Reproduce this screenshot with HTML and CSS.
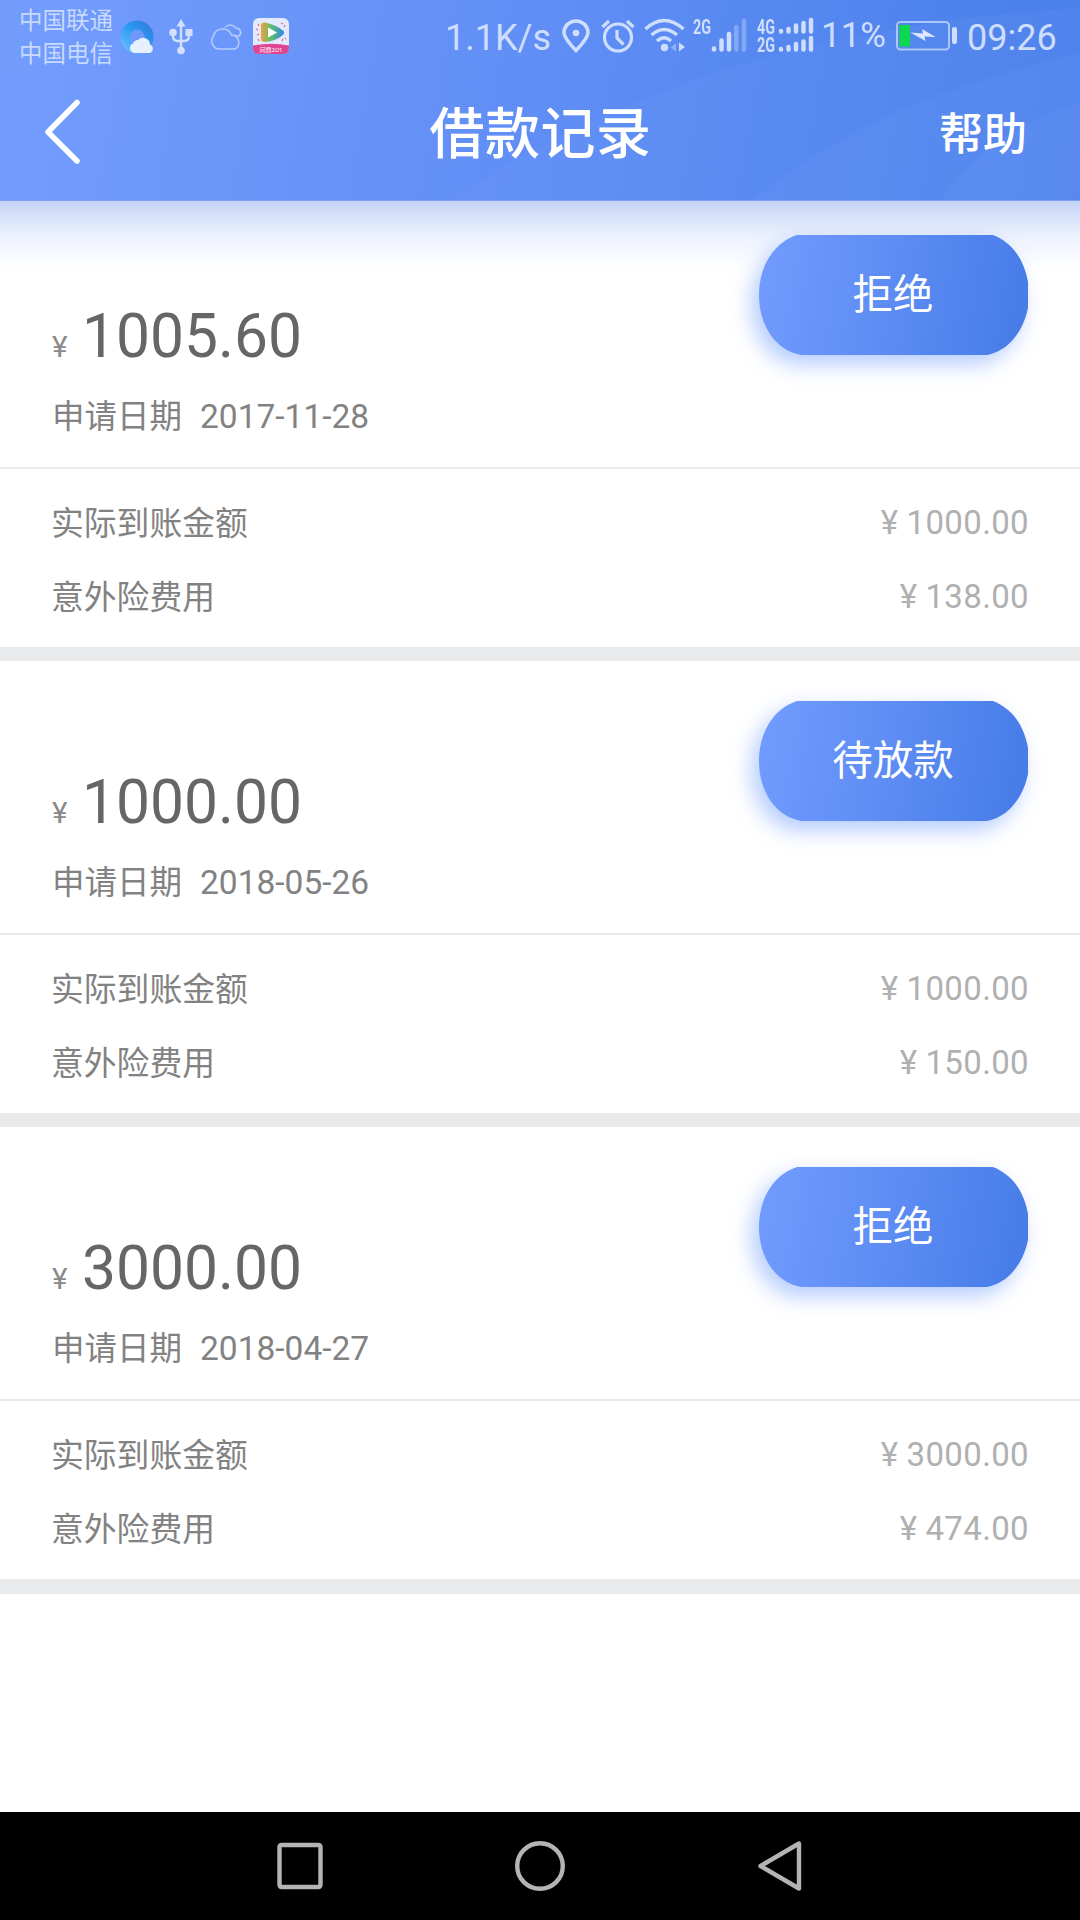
FILE: index.html
```html
<!DOCTYPE html>
<html lang="zh-CN">
<head>
<meta charset="utf-8">
<title>借款记录</title>
<link rel="stylesheet" href="styles.css">
</head>
<body>
<svg class="defs" width="0" height="0" aria-hidden="true">
  <defs>
    <linearGradient id="pill-fill" gradientUnits="userSpaceOnUse" x1="10" y1="20" x2="260" y2="65">
      <stop offset="0" stop-color="#709afd"/>
      <stop offset=".3" stop-color="#6592f8"/>
      <stop offset="1" stop-color="#487de8"/>
    </linearGradient>
    <symbol id="pill" viewBox="0 0 269 120">
      <path d="M38 0H234C254 8 265 25 269 47V73C264 97 249 116 228 120H42C16 115 0 90 0 60C0 32 14 8 38 0Z" fill="url(#pill-fill)"/>
    </symbol>
  </defs>
</svg>
<div class="screen">
  <header class="header">
    <svg class="waves" viewBox="0 0 1080 201" aria-hidden="true">
      <path d="M450 201Q590 107 760 59Q910 18 1080 8V201Z"/>
      <path d="M750 201Q850 122 960 88Q1020 66 1080 53V201Z"/>
      <path d="M942 201Q965 160 1010 133Q1040 115 1080 103V201Z"/>
    </svg>
    <div class="status">
      <div class="carriers"><span>中国联通</span><span>中国电信</span></div>
      <svg class="i-browser" width="34" height="34" viewBox="0 0 34 34">
        <defs><linearGradient id="ring" x1="0" y1="1" x2="1" y2="0"><stop offset="0" stop-color="#65b9ff"/><stop offset=".5" stop-color="#2a9cf5"/><stop offset="1" stop-color="#2f7fe0"/></linearGradient></defs>
        <circle cx="17" cy="17" r="12" fill="none" stroke="url(#ring)" stroke-width="9"/>
        <path d="M14 33a5 5 0 0 1-1-9.500a6 6 0 0 1 5-3.500a7 7 0 0 1 12 4.500a4.600 4.600 0 0 1 0 8.500Z" fill="#e7f0ff"/>
      </svg>
      <svg class="i-usb" width="24" height="36" viewBox="0 0 24 36" fill="none" stroke="#d3e0fd" stroke-width="2.400">
        <path d="M12 7V29M4 13V17Q4 22 9 22H15Q20 22 20 17V13"/>
        <path d="M12 0L16.500 7.500H7.500Z" fill="#d3e0fd" stroke="none"/>
        <circle cx="12" cy="31.500" r="3.800" fill="#d3e0fd" stroke="none"/>
        <circle cx="4" cy="13.500" r="3.800" fill="#d3e0fd" stroke="none"/>
        <path d="M16.500 10h7v7h-7z" fill="#d3e0fd" stroke="none"/>
      </svg>
      <svg class="i-cloud" width="32" height="28" viewBox="0 0 32 28" fill="none" stroke="#b5cbfc" stroke-width="1.500">
        <path d="M9 26A8 8 0 0 1 2.500 13A9.500 9.500 0 0 1 20.500 12A7.500 7.500 0 0 1 24 26Z"/>
        <path d="M14 4.500A7 7 0 0 1 25 5A4.500 4.500 0 0 1 28.500 12.500Q26.500 13.500 24 12.500"/>
      </svg>
      <div class="video-app">
        <svg width="36" height="36" viewBox="0 0 36 36">
          <defs><linearGradient id="play"><stop offset="0" stop-color="#f1a23c"/><stop offset=".45" stop-color="#57bf70"/><stop offset="1" stop-color="#3585e8"/></linearGradient></defs>
          <rect width="36" height="36" rx="6" fill="#e3eaff"/>
          <path d="M0 27.500Q18 24 36 27.500V30Q36 36 30 36H6Q0 36 0 30Z" fill="#df4593"/>
          <path d="M8 7Q8 4 12 4.500Q24 7 30.500 13Q32 15 30 17Q23 23 12 24Q8 24 8 21Z" fill="url(#play)"/>
          <path d="M15 9.500L24 14.500L15 19.500Z" fill="#fff"/>
          <path d="M5 6l1 2M3 11l2 1M4 17l2-1M5 21l1 2M28 5l2 1M31 9l1-2M29 23l1-2M32 20l1 1" stroke="#e46b72" stroke-width="1.200"/>
        </svg>
        <span>问鼎2O1</span>
      </div>
      <span class="speed">1.1K/s</span>
      <svg class="i-pin" width="28" height="36" viewBox="0 0 28 36" fill="none" stroke="#cfdefe">
        <path d="M14 31.500Q2 19 2 13.500A12 11.500 0 0 1 26 13.500Q26 19 14 31.500Z" stroke-width="3.500"/>
        <circle cx="14" cy="14" r="3.300" fill="#cfdefe" stroke="none"/>
      </svg>
      <svg class="i-alarm" width="34" height="36" viewBox="0 0 34 36" fill="none" stroke="#cfdefe" stroke-width="3.200">
        <circle cx="17" cy="19.500" r="13.500"/>
        <path d="M16 12V20L22.500 26.500M1.500 9L8 3M26 3L32.500 9"/>
      </svg>
      <svg class="i-wifi" width="42" height="36" viewBox="0 0 42 36" fill="none" stroke="#cfdefe" stroke-width="3.500">
        <path d="M1.500 11Q20 -6 39.500 11M7.500 17Q20 6 33 17M13 23Q20 16.500 27 23"/>
        <circle cx="20.500" cy="29.500" r="3.700" fill="#cfdefe" stroke="none"/>
        <path d="M32 25.500V33.500L26.500 29.500Z" fill="#8eb0f7" stroke="none"/><path d="M35 24.500V33.500L41 29Z" fill="#cfdefe" stroke="none"/>
      </svg>
      <span class="net"><span>2G</span></span>
      <svg class="i-sig" width="36" height="36" viewBox="0 0 36 36" stroke="#cfdefe" stroke-width="4.500" stroke-linecap="round">
        <path d="M3 30.500V31.500M10.500 22.500V31.500M18 16V31.500"/><path d="M25.300 9V31.500M33 3V31.500" stroke="#83a9f5"/>
      </svg>
      <span class="net net-dual"><span>4G<br>2G</span></span>
      <svg class="i-dual" width="36" height="36" viewBox="0 0 36 36" stroke="#cfdefe" stroke-width="4.500" stroke-linecap="round">
        <path d="M3 14V14.500M10.500 12V14.500M18 8.500V14.500M25.500 6V14.500M33 3V14.500M3 32V32.500M10.500 30V32.500M18 27V32.500M25.500 24.500V32.500M33 21V32.500"/>
      </svg>
      <span class="percent">11%</span>
      <svg class="i-batt" width="62" height="30" viewBox="0 0 62 30">
        <rect x="1" y="1" width="52" height="27.500" rx="3.500" fill="none" stroke="#aac6fa" stroke-width="2"/>
        <path d="M3.500 4H14V25.500H3.500Z" fill="#0dd84e"/>
        <path d="M14.500 11.500L27 12.500L26 8L39.500 16L28.500 15.500L29.500 20Z" fill="#dce8ff"/>
        <rect x="56" y="6" width="5" height="17" rx="2" fill="#cfdefe"/>
      </svg>
      <span class="clock">09:26</span>
    </div>
    <nav class="titlebar">
      <svg class="back" width="38" height="66" viewBox="0 0 38 66" fill="none" stroke="#fff" stroke-width="5.500" stroke-linecap="round" stroke-linejoin="round"><path d="M33 3.500L4 33L33 62"/></svg>
      <h1>借款记录</h1>
      <a class="help">帮助</a>
    </nav>
  </header>
  <main class="records">
    <article class="record">
      <div class="summary">
        <div class="loan">
          <p class="amount"><span class="yen">¥</span><span>1005.60</span></p>
          <p class="date"><span class="date-label">申请日期</span><span>2017-11-28</span></p>
        </div>
        <div class="state"><svg viewBox="0 0 269 120"><use href="#pill"/></svg><span>拒绝</span></div>
      </div>
      <dl class="details">
        <div><dt>实际到账金额</dt><dd>¥ 1000.00</dd></div>
        <div><dt>意外险费用</dt><dd>¥ 138.00</dd></div>
      </dl>
    </article>
    <article class="record">
      <div class="summary">
        <div class="loan">
          <p class="amount"><span class="yen">¥</span><span>1000.00</span></p>
          <p class="date"><span class="date-label">申请日期</span><span>2018-05-26</span></p>
        </div>
        <div class="state"><svg viewBox="0 0 269 120"><use href="#pill"/></svg><span>待放款</span></div>
      </div>
      <dl class="details">
        <div><dt>实际到账金额</dt><dd>¥ 1000.00</dd></div>
        <div><dt>意外险费用</dt><dd>¥ 150.00</dd></div>
      </dl>
    </article>
    <article class="record">
      <div class="summary">
        <div class="loan">
          <p class="amount"><span class="yen">¥</span><span>3000.00</span></p>
          <p class="date"><span class="date-label">申请日期</span><span>2018-04-27</span></p>
        </div>
        <div class="state"><svg viewBox="0 0 269 120"><use href="#pill"/></svg><span>拒绝</span></div>
      </div>
      <dl class="details">
        <div><dt>实际到账金额</dt><dd>¥ 3000.00</dd></div>
        <div><dt>意外险费用</dt><dd>¥ 474.00</dd></div>
      </dl>
    </article>
  </main>
  <footer class="navbar">
    <svg width="50" height="54" viewBox="0 0 50 54"><rect x="4.500" y="6" width="41" height="42" rx="2"/></svg>
    <svg width="50" height="54" viewBox="0 0 50 54"><circle cx="25" cy="27" r="22.800"/></svg>
    <svg width="50" height="54" viewBox="0 0 50 54"><path d="M44 4.500V49.500L5.500 27Z"/></svg>
  </footer>
</div>
</body>
</html>
```
FILE: styles.css
```css
* { box-sizing: border-box; margin: 0; padding: 0; }
body { font-family: Roboto, "Noto Sans CJK SC", sans-serif; background: #fff; color: #828282; }
.defs { position: absolute; }
.screen { width: 1080px; height: 1920px; display: flex; flex-direction: column; }
svg { display: block; flex: none; }

/* header */
.header {
  position: relative;
  height: 201px;
  flex: none;
  background: linear-gradient(100deg, #739dfd 0%, #6390f7 43%, #4d82eb 88%, #4a7ee9 100%);
  border-bottom: 1px solid #7d9ff0;
}
.waves { position: absolute; inset: 0; width: 1080px; height: 201px; fill: #7ba4ff; fill-opacity: .12; }
.status { position: relative; display: flex; height: 74px; padding-left: 19px; color: #cfdefe; white-space: nowrap; align-items: flex-start; }
.carriers { display: flex; flex-direction: column; width: 101px; font-size: 23.500px; line-height: 32.500px; padding-top: 5px; color: #c8d9fe; }
.i-browser { margin-top: 20px; }
.i-usb { margin: 19px 0 0 15px; }
.i-cloud { margin: 23px 0 0 18px; }
.video-app { display: grid; width: 36px; margin: 18px 0 0 10px; }
.video-app > * { grid-area: 1 / 1; }
.video-app span { align-self: end; text-align: center; font-size: 6px; line-height: 8px; color: #fff; }
.speed { width: 105px; margin: 17px 0 0 156px; font-size: 36px; line-height: 42px; }
.i-pin { margin: 19px 0 0 12px; }
.i-alarm { margin: 18px 0 0 11px; }
.i-wifi { margin: 18px 0 0 9px; }
.net { width: 19px; margin: 18px 0 0 7px; font: 700 20.500px/18px Roboto, sans-serif; }
.net span { display: block; transform: scaleX(.7); transform-origin: left; }
.i-sig { margin: 18px 0 0 -1px; }
.net-dual { margin-left: 10px; }
.i-dual { margin: 17px 0 0 2px; }
.percent { width: 66px; margin: 15px 0 0 7px; font-size: 35px; line-height: 42px; }
.i-batt { margin: 21px 0 0 9px; }
.clock { margin: 17px 0 0 9px; font-size: 36px; line-height: 42px; }
.titlebar { position: relative; display: grid; grid-template-columns: 1fr auto 1fr; align-items: center; height: 120px; padding: 0 53px 0 54px; color: #fff; }
.back { align-self: start; margin: 25px 0 0 -10px; }
h1 { font-size: 55px; line-height: 64px; font-weight: 500; letter-spacing: .5px; }
.help { justify-self: end; padding-top: 2px; font-size: 44px; line-height: 64px; font-weight: 500; }

/* loan records */
.records { flex: 1; background: linear-gradient(#c3d3f7 0, #d3dff9 12px, #eef2fd 36px, #fff 68px); }
.record { height: 466px; border-bottom: 14px solid #e9eaec; }
.record:first-child { margin-top: -6px; }
.record:last-child { height: 467px; border-bottom-width: 15px; }
.summary { display: flex; justify-content: space-between; height: 274px; padding: 40px 52px 0; border-bottom: 2px solid #ebebeb; }
.loan { padding-top: 67px; }
.amount { display: flex; align-items: baseline; font-size: 60.500px; line-height: 70px; color: #666; }
.yen { width: 30px; font-size: 29.500px; color: #8a8a8a; }
.date { display: flex; gap: 18px; margin-top: 15px; font-size: 33.500px; line-height: 40px; }
.date-label { font-size: 32.500px; }
.state { display: grid; place-items: center; width: 269px; height: 120px; color: #fff; font-size: 40.500px; line-height: 60px; }
.state > * { grid-area: 1 / 1; }
.state svg { width: 269px; height: 120px; overflow: visible; filter: drop-shadow(-7px 9px 11px rgba(75, 130, 250, .42)); }
.state span { z-index: 1; padding-right: 1px; }
.details { padding: 32px 51px 0; }
.details div { display: flex; justify-content: space-between; align-items: center; height: 42px; margin-bottom: 32px; }
dt { font-size: 32.800px; padding-bottom: 3px; }
dd { color: #b0b0b0; font-size: 33px; letter-spacing: .35px; word-spacing: -.5px; }

/* system navigation */
.navbar { height: 108px; flex: none; display: flex; justify-content: center; gap: 190px; padding-top: 27px; background: #000; fill: none; stroke: #b4b4b4; stroke-width: 4.400px; stroke-linejoin: round; }
```
